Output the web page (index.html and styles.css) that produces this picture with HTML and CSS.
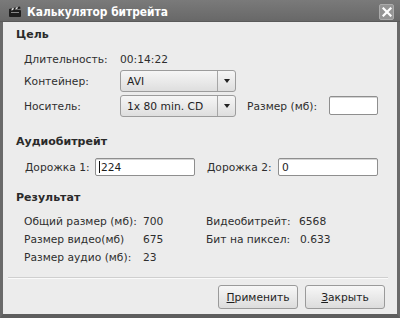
FILE: index.html
```html
<!DOCTYPE html>
<html lang="ru">
<head>
<meta charset="utf-8">
<link rel="stylesheet" href="styles.css">
</head>
<body>
<div class="window">
  <div class="titlebar">
    <svg class="app-icon" width="14" height="13" viewBox="0 0 14 13">
      <rect x="1" y="5" width="12" height="7" rx="1" fill="#1e1e1e"/>
      <path d="M1 4 L12 1.5 L12.6 3.6 L1.4 6 Z" fill="#1e1e1e"/>
      <path d="M4 3.3 L6 2.9 L5.2 5 L3.2 5.4 Z M8 2.4 L10 2 L9.2 4.1 L7.2 4.5 Z" fill="#dcdcdc"/>
      <rect x="3" y="7" width="8" height="1" fill="#888"/>
    </svg>
    <span class="title">Калькулятор битрейта</span>
    <span class="close">
      <svg width="10" height="10" viewBox="0 0 10 10"><path d="M1.5 1.5 L8.5 8.5 M8.5 1.5 L1.5 8.5" stroke="#fff" stroke-width="2.2" stroke-linecap="square"/></svg>
    </span>
  </div>
  <div class="content">
    <div class="heading h-goal">Цель</div>
    <div class="goal">
      <div class="row r1"><span class="lbl">Длительность:</span><span>00:14:22</span></div>
      <div class="row r2"><span class="lbl">Контейнер:</span>
        <div class="combo"><span class="combo-text">AVI</span><span class="combo-btn"><i class="arrow"></i></span></div>
      </div>
      <div class="row r3"><span class="lbl">Носитель:</span>
        <div class="combo"><span class="combo-text">1x 80 min. CD</span><span class="combo-btn"><i class="arrow"></i></span></div>
        <span class="size-lbl">Размер (мб):</span>
        <div class="entry entry-size"></div>
      </div>
    </div>
    <div class="heading h-audio">Аудиобитрейт</div>
    <div class="audio">
      <span class="track-lbl">Дорожка 1:</span>
      <div class="entry entry-track"><span class="cursor"></span>224</div>
      <span class="track-lbl track2">Дорожка 2:</span>
      <div class="entry entry-track">0</div>
    </div>
    <div class="heading h-result">Результат</div>
    <div class="result">
      <span>Общий размер (мб):</span><span>700</span><span>Видеобитрейт:</span><span>6568</span>
      <span>Размер видео(мб)</span><span>675</span><span>Бит на пиксел:</span><span class="v2">0.633</span>
      <span>Размер аудио (мб):</span><span>23</span><span></span><span></span>
    </div>
  </div>
  <div class="separator"></div>
  <div class="buttons">
    <button class="btn"><u>П</u>рименить</button>
    <button class="btn"><u>З</u>акрыть</button>
  </div>
</div>
</body>
</html>
```

FILE: styles.css
```css
html, body {
  margin: 0;
  padding: 0;
}
body {
  width: 400px;
  height: 318px;
  overflow: hidden;
  font-family: "DejaVu Sans", sans-serif;
  font-size: 10.7px;
  color: #2e2e2e;
  background: #6a6a6a;
}
.window {
  box-sizing: border-box;
  width: 400px;
  height: 318px;
  background: #ececec;
  border-left: 3px solid #6a6a6a;
  border-right: 3px solid #6a6a6a;
  border-bottom: 4px solid #5e5e5e;
  display: flex;
  flex-direction: column;
}
.titlebar {
  box-sizing: border-box;
  height: 22px;
  margin: 0 -3px;
  padding: 2px 6px 0 8px;
  background: linear-gradient(#7a7a7a, #686868);
  display: flex;
  align-items: center;
  color: #fff;
  border-bottom: 1px solid #5a5a5a;
}
.app-icon {
  margin-right: 5px;
  flex: none;
}
.title {
  font-weight: bold;
  font-size: 13px;
  flex: 1;
  white-space: nowrap;
  transform: scaleX(0.82);
  transform-origin: left center;
}
.close {
  width: 13px;
  height: 14px;
  background: #959595;
  border: 1px solid #ababab;
  border-radius: 2px;
  display: flex;
  align-items: center;
  justify-content: center;
  flex: none;
}
.content {
  padding: 0 12px 0 13px;
  flex: 1;
}
.heading {
  font-weight: bold;
  font-size: 11px;
  height: 14px;
  line-height: 14px;
  color: #2a2a2a;
}
.h-goal { margin-top: 6px; }
.h-audio { margin-top: 18px; }
.h-result { margin-top: 15px; }
.goal {
  margin-top: 6px;
  padding-left: 8px;
}
.row {
  display: flex;
  align-items: center;
  height: 22px;
}
.r3 { margin-top: 3px; }
.lbl {
  width: 96px;
  flex: none;
}
.combo {
  box-sizing: border-box;
  width: 116px;
  height: 22px;
  border: 1px solid #9c9c9c;
  border-radius: 3px;
  background: linear-gradient(#f6f6f6, #dedede);
  display: flex;
  align-items: center;
}
.combo-text {
  flex: 1;
  padding-left: 6px;
  color: #1e1e1e;
}
.combo-btn {
  width: 17px;
  height: 20px;
  border-left: 1px solid #a6a6a6;
  display: flex;
  align-items: center;
  justify-content: center;
}
.arrow {
  width: 0;
  height: 0;
  border-left: 3.5px solid transparent;
  border-right: 3.5px solid transparent;
  border-top: 4px solid #222;
}
.size-lbl {
  margin-left: 11px;
  width: 82px;
}
.entry {
  box-sizing: border-box;
  background: #fff;
  border: 1px solid #8e8e8e;
  border-radius: 2px;
  box-shadow: inset 0 1px 0 #d4d4d4;
  display: flex;
  align-items: center;
  padding-left: 3px;
  color: #1e1e1e;
}
.entry-size {
  width: 49px;
  height: 19px;
  margin-top: -1px;
}
.audio {
  margin-top: 9px;
  padding-left: 9px;
  display: flex;
  align-items: center;
  height: 18px;
}
.track-lbl {
  width: 70px;
  flex: none;
}
.track2 {
  margin-left: 12px;
  width: 71px;
}
.entry-track {
  width: 100px;
  height: 18px;
}
.cursor {
  display: inline-block;
  width: 1px;
  height: 12px;
  background: #111;
  margin-right: 1px;
}
.result {
  margin-top: 7px;
  padding-left: 8px;
  display: grid;
  grid-template-columns: 119px 63px 93px auto;
  grid-auto-rows: 18px;
  align-items: center;
}
.v2 { padding-left: 1px; }
.separator {
  height: 1px;
  margin: 0 9px 0 5px;
  background: #cfcfcf;
  border-bottom: 1px solid #fafafa;
}
.buttons {
  display: flex;
  justify-content: flex-end;
  gap: 7px;
  padding: 6px 12px 5px 0;
}
.btn {
  box-sizing: border-box;
  width: 80px;
  height: 24px;
  font-family: "DejaVu Sans", sans-serif;
  font-size: 10.7px;
  color: #1e1e1e;
  border: 1px solid #9a9a9a;
  border-radius: 3px;
  background: linear-gradient(#f7f7f7, #dcdcdc);
  padding: 0;
}
.btn u { text-decoration: underline; }
```
